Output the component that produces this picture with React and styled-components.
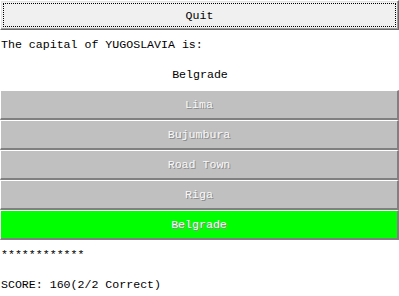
import styled, { createGlobalStyle } from 'styled-components';

const GlobalStyle = createGlobalStyle`
    body {
        margin: 0;
        background: #ffffff;
        font-family: "Liberation Mono", "Courier New", monospace;
        font-size: 11.6px;
        color: #000000;
    }
`

const Page = styled.div`
    display: flex;
    flex-direction: column;
    width: 399px;
`

const QuitButton = styled.button`
    height: 30px;
    width: 100%;
    padding: 2px;
    margin: 0;
    background: #f0f0f0;
    border: 1px solid;
    border-color: #ffffff #696969 #696969 #ffffff;
    box-shadow: inset -1px -1px 0 #a0a0a0, inset 1px 1px 0 #e3e3e3;
    font: inherit;
    color: #000000;
    display: flex;
`

const FocusRing = styled.span`
    flex: 1;
    display: flex;
    align-items: center;
    justify-content: center;
    border: 1px dotted #000000;
`

const Line = styled.div`
    height: 30px;
    line-height: 30px;
    padding-left: 1px;
    text-align: ${p => (p.$center ? 'center' : 'left')};
    white-space: pre;
`

const Answers = styled.div`
    display: flex;
    flex-direction: column;
`

const Answer = styled.button`
    height: 30px;
    width: 100%;
    margin: 0;
    padding: 0;
    font: inherit;
    background: ${p => (p.$correct ? '#00ff00' : '#c0c0c0')};
    border: 2px solid;
    border-color: #ffffff #808080 #808080 #ffffff;
    border-top-width: 1px;
    border-left-width: 1px;
    color: #f8f8f8;
    text-shadow: 1px 1px 0 #8c8c8c;
`

const answers = ['Lima', 'Bujumbura', 'Road Town', 'Riga', 'Belgrade'];

export default function App() {
    return (
        <Page>
            <GlobalStyle />
            <QuitButton>
                <FocusRing>Quit</FocusRing>
            </QuitButton>
            <Line>The capital of YUGOSLAVIA is:</Line>
            <Line $center>Belgrade</Line>
            <Answers>
                {answers.map(a => (
                    <Answer key={a} disabled $correct={a === 'Belgrade'}>{a}</Answer>
                ))}
            </Answers>
            <Line>************</Line>
            <Line>SCORE: 160(2/2 Correct)</Line>
        </Page>
    );
}
